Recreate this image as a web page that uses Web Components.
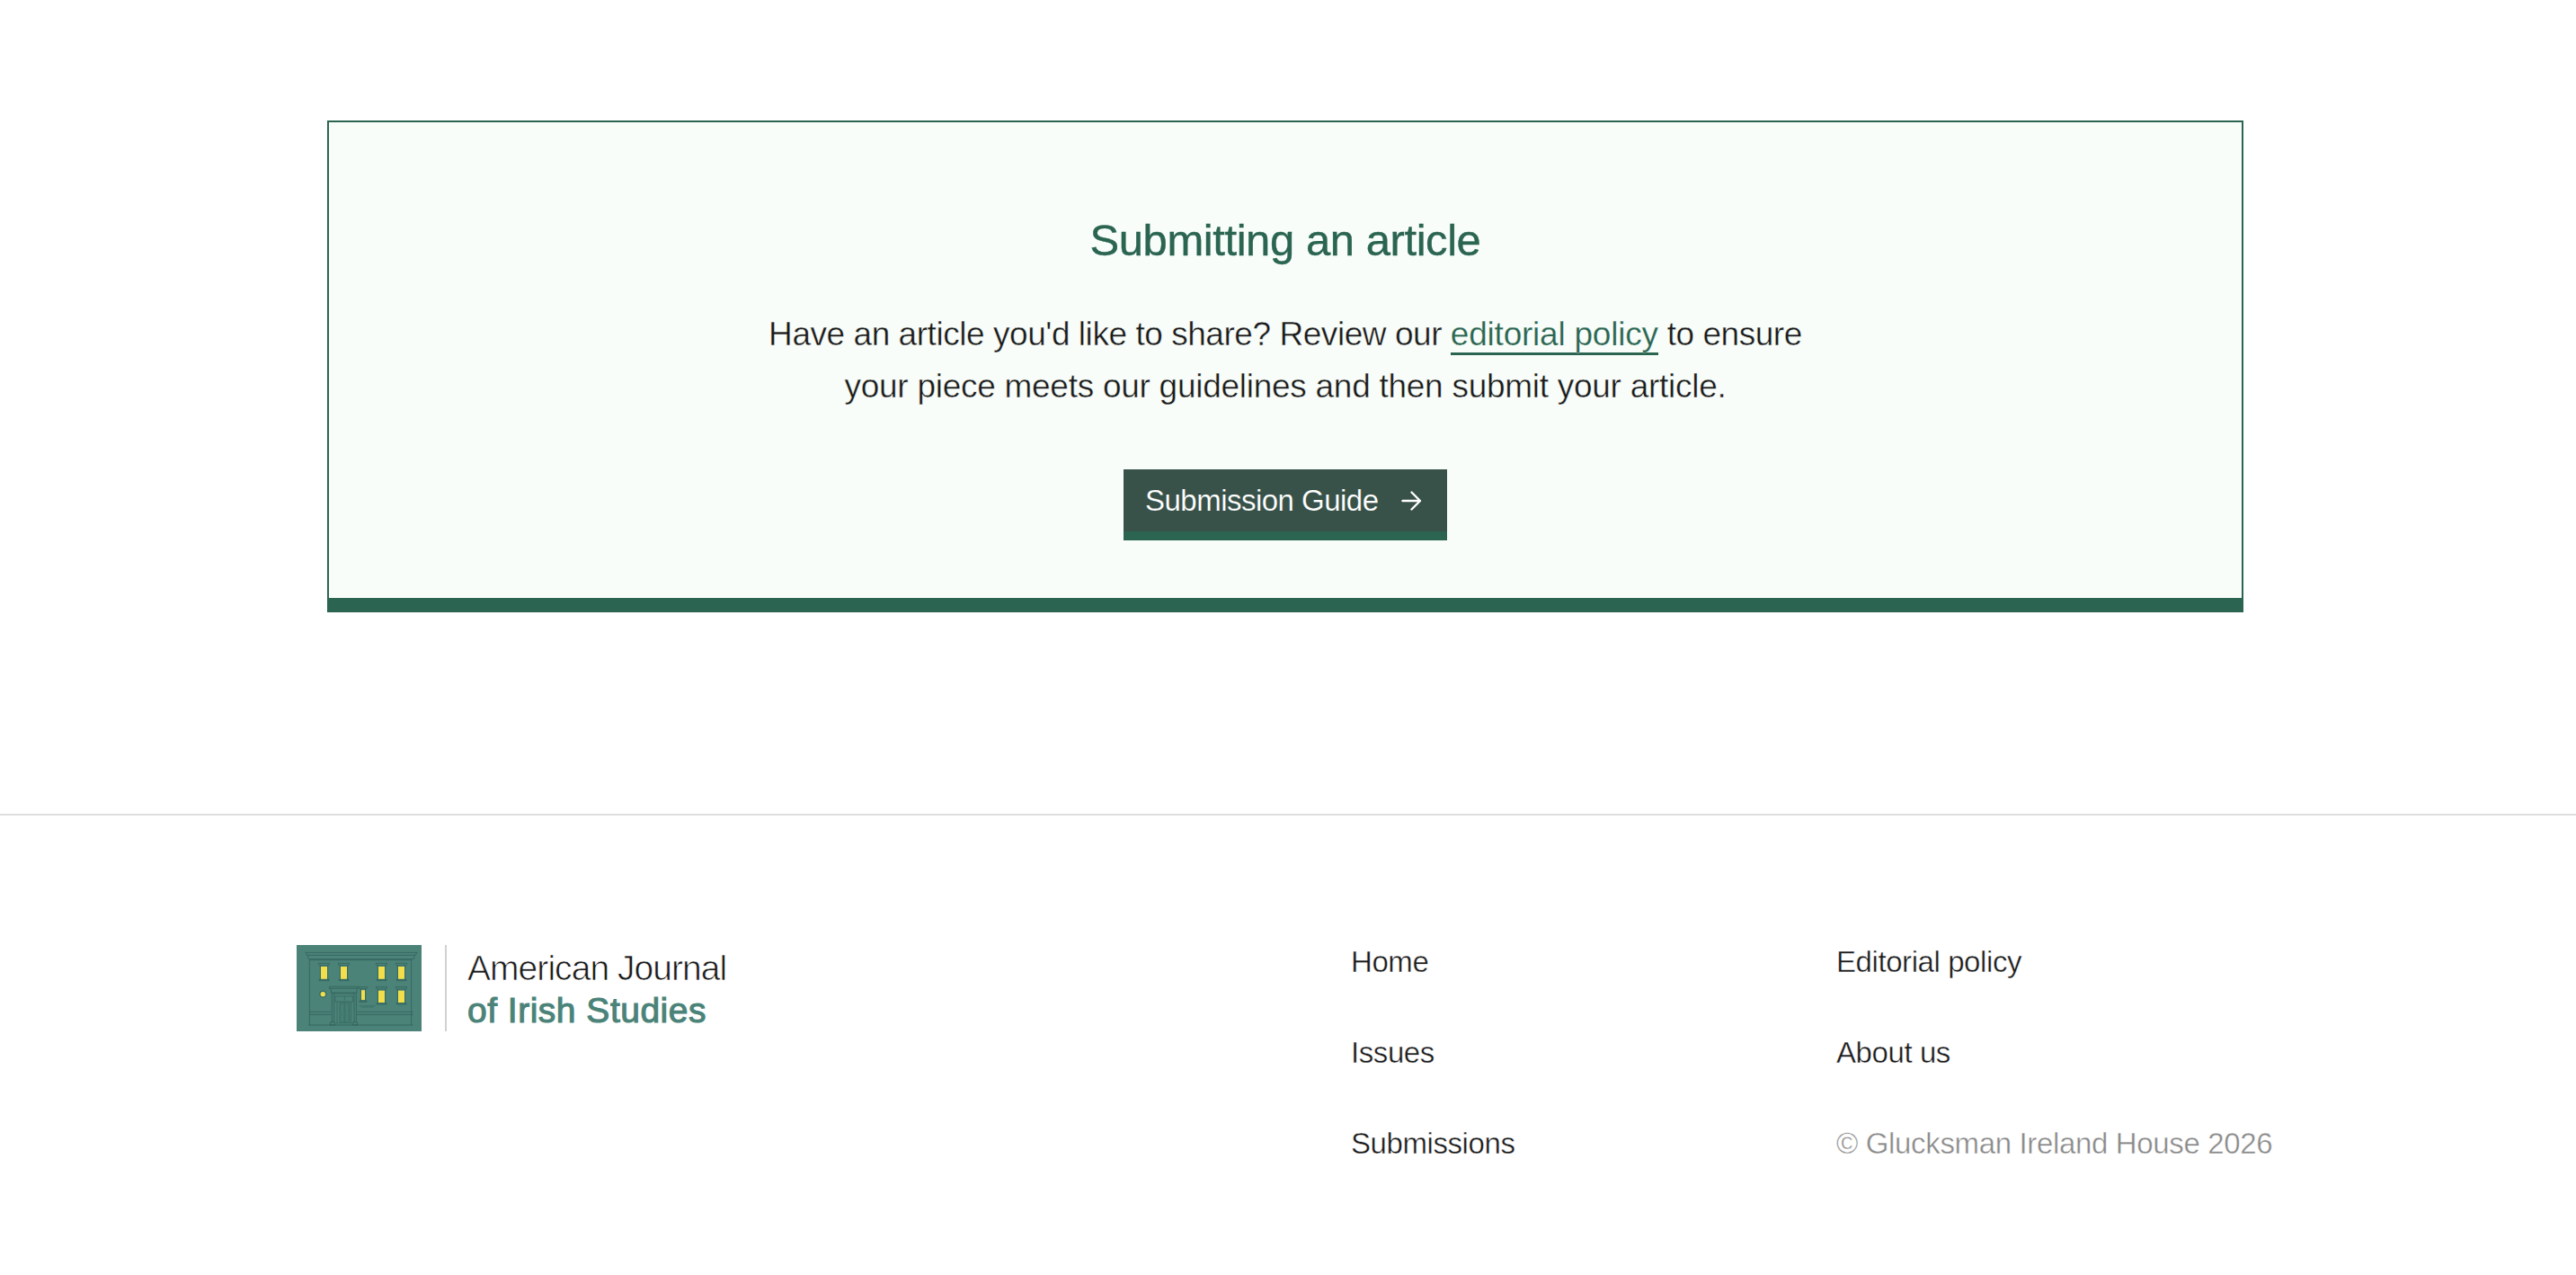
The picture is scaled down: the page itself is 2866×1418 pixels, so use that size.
<!DOCTYPE html>
<html lang="en">
<head>
<meta charset="utf-8">
<title>American Journal of Irish Studies</title>
<style>
    body{
        margin: 0;
        background: #fff;
        color: #1a1a1a;
        font-family: "Liberation Sans", Arial, sans-serif;
    }
</style>
</head>
<body>

<template id="ajis-callout">
    <style>
        :host{
            display: flex;
            flex-direction: column;
            align-items: center;
            box-sizing: border-box;
            width: 2132px;
            height: 547px;
            margin: 134px 0 0 364px;
            padding-top: 102px;
            border: 2px solid #2b6551;
            border-bottom-width: 16px;
            background: #f8fdf9;
            --paper: #f8fdf9;
        }
        h2{
            margin: 0;
            font-size: 49px;
            font-weight: 400;
            line-height: 58px;
            letter-spacing: -.43px;
            color: #2b6551;
            -webkit-text-stroke: .4px #2b6551;
        }
        p{
            width: 1180px;
            margin: 47px 0 63px;
            font-size: 37px;
            line-height: 58px;
            letter-spacing: -.45px;
            text-align: center;
            white-space: nowrap;
            -webkit-text-stroke: .4px var(--paper);
        }
        ::slotted(.line){
            letter-spacing: -.27px;
        }
    </style>
    <h2><slot name="heading"></slot></h2>
    <p><slot></slot></p>
    <slot name="action"></slot>
</template>

<template id="ajis-link">
    <style>
        :host{
            display: inline;
        }
        a{
            color: #2b6551;
            letter-spacing: -.22px;
            text-decoration: none;
            box-shadow: 0 3px 0 #2b6551;
            -webkit-text-stroke-width: .25px;
        }
    </style>
    <a href="#"><slot></slot></a>
</template>

<template id="ajis-button">
    <style>
        :host{
            display: block;
        }
        a{
            display: flex;
            align-items: center;
            box-sizing: border-box;
            width: 360px;
            height: 79px;
            padding: 1px 26px 0 24px;
            border-bottom: 10px solid #2b6551;
            background: #385249;
            color: #fff;
            font-size: 33px;
            line-height: 48px;
            letter-spacing: -.52px;
            text-decoration: none;
            white-space: nowrap;
            -webkit-text-stroke: .2px #385249;
        }
        span{
            flex: 1;
        }
        svg{
            width: 26px;
            height: 26px;
        }
    </style>
    <a href="#">
        <span><slot></slot></span>
        <svg viewBox="0 0 26 26" fill="none" stroke="#fff" stroke-width="2.4" stroke-linecap="round" stroke-linejoin="round">
            <path d="M2.5 13H22M12.5 3.5l9.5 9.5-9.5 9.5"/>
        </svg>
    </a>
</template>

<template id="ajis-logo">
    <style>
        :host{
            display: flex;
            height: 96px;
        }
        svg{
            width: 139px;
            height: 96px;
        }
        .name{
            margin-left: 26px;
            padding: 2px 0 0 23px;
            border-left: 2px solid #d0d1d2;
            height: 94px;
            font-size: 39px;
            line-height: 47px;
            white-space: nowrap;
        }
        .first{
            letter-spacing: -.95px;
            -webkit-text-stroke: .7px #fff;
        }
        .second{
            color: #4b8379;
            letter-spacing: .5px;
            -webkit-text-stroke: 1.1px #4b8379;
        }
    </style>
    <svg viewBox="30 33 417 288">
        <path fill="#4b8379" d="M30 33h417v288H30z"/>
        <g fill="none" stroke="#2f5d56" stroke-width="2.2">
            <!-- cornice -->
            <path d="M60 58H432L426 67H64ZM67 67L70 80H421L424 67M73 83H414"/>
            <!-- walls and string course -->
            <path d="M73 83V300M413 83V300M72 256H145M72 265H145M231 256H419M231 265H419M70 300H418"/>
            <!-- porch -->
            <path d="M139 172H236V178H139ZM145 179V192H231V179M148 192V291M155 192V291M222 192V291M229 192V291M142 291H158V300H142ZM218 291H233V300H218Z"/>
            <path stroke-width="1.7" d="M155 195H222M159 204H218V222H159ZM165 222V297M212 222V297M174 225H206V292H174ZM190 225V292M190 205V218"/>
            <path stroke-width="1" d="M178 230H186V258H178ZM194 230H202V258H194ZM178 264H186V287H178ZM194 264H202V287H194ZM165 293H212"/>
            <!-- window heads and sills -->
            <path d="M103 94H140V97L137 101H106L103 97ZM105 148H138V152H105ZM109 101V148M134 101V148"/>
            <path d="M169 94H206V97L203 101H172L169 97ZM172 148H204V152H172ZM175 101V148M200 101V148"/>
            <path d="M295 94H332V97L329 101H298L295 97ZM298 148H330V152H298ZM301 101V148M326 101V148"/>
            <path d="M361 94H398V97L395 101H364L361 97ZM364 148H396V152H364ZM367 101V148M392 101V148"/>
            <path d="M295 173H332V176L329 180H298L295 176ZM298 227H330V231H298ZM301 180V227M326 180V227"/>
            <path d="M361 173H398V176L395 180H364L361 176ZM364 227H396V231H364ZM367 180V227M392 180V227"/>
            <path d="M238 173H266V176L263 179H241L238 176ZM240 219H264V223H240ZM244 179V219M260 179V219"/>
            <path stroke-width="1.6" d="M240 236H294M246 240H288" stroke-dasharray="5 1"/>
            <circle cx="118" cy="197" r="11"/>
        </g>
        <g fill="#f1de4a">
            <path d="M111 105H132V146H111ZM177 105H198V146H177ZM303 105H324V146H303ZM369 105H390V146H369Z"/>
            <path d="M303 185H324V225H303ZM369 185H390V225H369ZM246 184H258V216H246Z"/>
            <circle cx="118" cy="197" r="8"/>
        </g>
    </svg>
    <div class="name">
        <div class="first"><slot name="first"></slot></div>
        <div class="second"><slot name="second"></slot></div>
    </div>
</template>

<template id="ajis-nav">
    <style>
        :host{
            display: flex;
            flex-direction: column;
            gap: 50px;
            font-size: 33px;
            line-height: 51px;
            letter-spacing: -.42px;
            white-space: nowrap;
            -webkit-text-stroke: .4px #fff;
        }
        ::slotted(a){
            color: #1a1a1a;
            text-decoration: none;
        }
        ::slotted(small){
            color: #8a8a8a;
            font-size: inherit;
            letter-spacing: -.35px;
        }
    </style>
    <slot></slot>
</template>

<template id="ajis-footer">
    <style>
        :host{
            display: grid;
            grid-template-columns: 1173px 540px 1fr;
            align-items: start;
            box-sizing: border-box;
            height: 513px;
            margin-top: 224px;
            padding: 137px 0 0 330px;
            border-top: 2px solid #dedede;
        }
        ::slotted(ajis-logo){
            margin-top: 7px;
        }
    </style>
    <slot></slot>
</template>

<ajis-callout>
    <span slot="heading">Submitting an article</span>
    Have an article you'd like to share? Review our <ajis-link>editorial policy</ajis-link> to ensure<br>
    <span class="line">your piece meets our guidelines and then submit your article.</span>
    <ajis-button slot="action">Submission Guide</ajis-button>
</ajis-callout>

<ajis-footer>
    <ajis-logo>
        <span slot="first">American Journal</span>
        <span slot="second">of Irish Studies</span>
    </ajis-logo>
    <ajis-nav>
        <a href="#">Home</a>
        <a href="#">Issues</a>
        <a href="#">Submissions</a>
    </ajis-nav>
    <ajis-nav>
        <a href="#">Editorial policy</a>
        <a href="#">About us</a>
        <small>© Glucksman Ireland House 2026</small>
    </ajis-nav>
</ajis-footer>

<script>
    class TemplateElement extends HTMLElement {
        constructor(){
            super()

            const template = document.getElementById(this.localName).content
            this.attachShadow({ mode: 'open' }).appendChild(template.cloneNode(true))
        }
    }

    customElements.define('ajis-callout', class Callout extends TemplateElement {})
    customElements.define('ajis-link', class Link extends TemplateElement {})
    customElements.define('ajis-button', class Button extends TemplateElement {})
    customElements.define('ajis-logo', class Logo extends TemplateElement {})
    customElements.define('ajis-nav', class Nav extends TemplateElement {})
    customElements.define('ajis-footer', class Footer extends TemplateElement {})
</script>
</body>
</html>
